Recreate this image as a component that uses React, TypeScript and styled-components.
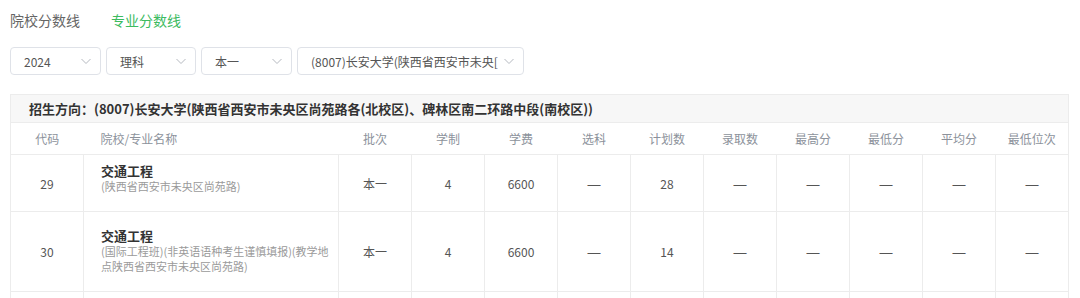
import React from 'react';
import styled, { createGlobalStyle } from 'styled-components';

const GlobalStyle = createGlobalStyle`
  body {
    margin: 0;
    background: #fff;
    font-family: 'Noto Sans CJK SC', 'Noto Sans', sans-serif;
  }
`;

const Page = styled.div`
  padding: 0 12px 0 10px;
  width: 1058px;
`;

const Tabs = styled.div`
  display: flex;
  gap: 31px;
  height: 40px;
  align-items: center;
`;

const Tab = styled.div<{ $active?: boolean }>`
  font-size: 14px;
  color: ${p => (p.$active ? '#3dbb5f' : '#666')};
  cursor: pointer;
`;

const Filters = styled.div`
  display: flex;
  gap: 5px;
  margin-top: 7px;
`;

const Select = styled.div<{ $w: number }>`
  box-sizing: border-box;
  width: ${p => p.$w}px;
  height: 28px;
  border: 1px solid #dfe2e8;
  border-radius: 4px;
  display: flex;
  align-items: center;
  padding: 0 8px 0 13px;
  gap: 4px;
  font-size: 12px;
  color: #555;
`;

const SelectText = styled.span`
  flex: 1;
  overflow: hidden;
  white-space: nowrap;
`;

const Chevron = () => (
  <svg width="12" height="12" viewBox="0 0 12 12" fill="none">
    <path d="M1.5 4l4.5 4.5L10.5 4" stroke="#b5b9c0" strokeWidth="1" />
  </svg>
);

const Table = styled.table`
  margin-top: 19px;
  width: 1058px;
  border-collapse: collapse;
  border: 1px solid #ececec;
  table-layout: fixed;
  font-size: 12px;
  color: #555;
`;

const TitleCell = styled.th`
  height: 27px;
  padding: 0 0 0 18px;
  background: #f7f7f7;
  border: 1px solid #ececec;
  text-align: left;
  font-size: 13px;
  font-weight: 700;
  color: #333;
  white-space: nowrap;
`;

const HeadCell = styled.th<{ $left?: boolean }>`
  height: 31px;
  padding: ${p => (p.$left ? '0 0 0 17px' : '0')};
  border-bottom: 1px solid #ececec;
  font-weight: 400;
  font-size: 12px;
  color: #8c929b;
  text-align: ${p => (p.$left ? 'left' : 'center')};
`;

const Row = styled.tr<{ $h: number }>`
  height: ${p => p.$h}px;
`;

const Cell = styled.td`
  border: 1px solid #ececec;
  text-align: center;
  vertical-align: middle;
  padding: 0;
`;

const Dash = styled.span`
  font-family: 'Liberation Sans', sans-serif;
  font-size: 13px;
  color: #555;
`;

const NameCell = styled.td<{ $pb: number }>`
  border: 1px solid #ececec;
  padding: 0 8px ${p => p.$pb}px 17px;
  vertical-align: middle;
`;

const Major = styled.div`
  font-size: 13px;
  font-weight: 700;
  color: #333;
  line-height: 16px;
`;

const Note = styled.div`
  font-size: 11px;
  color: #9a9a9a;
  line-height: 15px;
`;

const heads = ['批次', '学制', '学费', '选科', '计划数', '录取数', '最高分', '最低分', '平均分', '最低位次'];

const rows = [
  { code: '29', note: '(陕西省西安市未央区尚苑路)', plan: '28', h: 57, pb: 9 },
  { code: '30', note: '(国际工程班)(非英语语种考生谨慎填报)(教学地点陕西省西安市未央区尚苑路)', plan: '14', h: 80, pb: 1 },
];

const dash = <Dash>—</Dash>;

export default function App() {
  return (
    <Page>
      <GlobalStyle />
      <Tabs>
        <Tab>院校分数线</Tab>
        <Tab $active>专业分数线</Tab>
      </Tabs>
      <Filters>
        <Select $w={91}><SelectText>2024</SelectText><Chevron /></Select>
        <Select $w={90}><SelectText>理科</SelectText><Chevron /></Select>
        <Select $w={91}><SelectText>本一</SelectText><Chevron /></Select>
        <Select $w={227}><SelectText>(8007)长安大学(陕西省西安市未央[</SelectText><Chevron /></Select>
      </Filters>
      <Table>
        <colgroup>
          <col style={{ width: 73 }} />
          <col style={{ width: 255 }} />
          {heads.map(h => <col key={h} style={{ width: 73 }} />)}
        </colgroup>
        <thead>
          <tr>
            <TitleCell colSpan={12}>
              招生方向：(8007)长安大学(陕西省西安市未央区尚苑路各(北校区)、碑林区南二环路中段(南校区))
            </TitleCell>
          </tr>
          <tr>
            <HeadCell>代码</HeadCell>
            <HeadCell $left>院校/专业名称</HeadCell>
            {heads.map(h => <HeadCell key={h}>{h}</HeadCell>)}
          </tr>
        </thead>
        <tbody>
          {rows.map(r => (
            <Row key={r.code} $h={r.h}>
              <Cell>{r.code}</Cell>
              <NameCell $pb={r.pb}>
                <Major>交通工程</Major>
                <Note>{r.note}</Note>
              </NameCell>
              <Cell>本一</Cell>
              <Cell>4</Cell>
              <Cell>6600</Cell>
              <Cell>{dash}</Cell>
              <Cell>{r.plan}</Cell>
              <Cell>{dash}</Cell>
              <Cell>{dash}</Cell>
              <Cell>{dash}</Cell>
              <Cell>{dash}</Cell>
              <Cell>{dash}</Cell>
            </Row>
          ))}
          <Row $h={10}>
            {Array.from({ length: 12 }).map((_, i) => <Cell key={i} />)}
          </Row>
        </tbody>
      </Table>
    </Page>
  );
}
